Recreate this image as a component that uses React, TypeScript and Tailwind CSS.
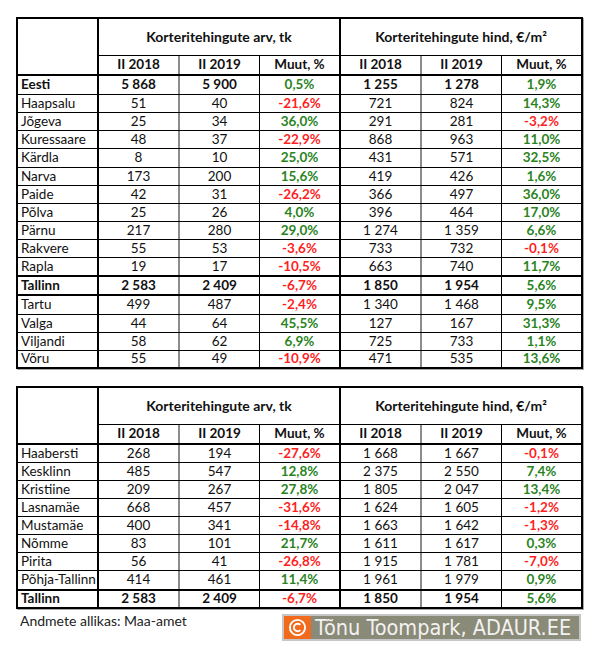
import React from "react";

type Row = { name: string; v: string[]; h: string; b: string; bold?: boolean };

const t1: Row[] = [
  { name: "Eesti", v: ["5 868", "5 900", "0,5%", "1 255", "1 278", "1,9%"], h: "h-[19px]", b: "border-b", bold: true },
  { name: "Haapsalu", v: ["51", "40", "-21,6%", "721", "824", "14,3%"], h: "h-[18px]", b: "border-b" },
  { name: "Jõgeva", v: ["25", "34", "36,0%", "291", "281", "-3,2%"], h: "h-[18px]", b: "border-b" },
  { name: "Kuressaare", v: ["48", "37", "-22,9%", "868", "963", "11,0%"], h: "h-[18px]", b: "border-b" },
  { name: "Kärdla", v: ["8", "10", "25,0%", "431", "571", "32,5%"], h: "h-[19px]", b: "border-b" },
  { name: "Narva", v: ["173", "200", "15,6%", "419", "426", "1,6%"], h: "h-[18px]", b: "border-b" },
  { name: "Paide", v: ["42", "31", "-26,2%", "366", "497", "36,0%"], h: "h-[18px]", b: "border-b" },
  { name: "Põlva", v: ["25", "26", "4,0%", "396", "464", "17,0%"], h: "h-[18px]", b: "border-b" },
  { name: "Pärnu", v: ["217", "280", "29,0%", "1 274", "1 359", "6,6%"], h: "h-[18px]", b: "border-b" },
  { name: "Rakvere", v: ["55", "53", "-3,6%", "733", "732", "-0,1%"], h: "h-[18px]", b: "border-b" },
  { name: "Rapla", v: ["19", "17", "-10,5%", "663", "740", "11,7%"], h: "h-[19px]", b: "border-b-2" },
  { name: "Tallinn", v: ["2 583", "2 409", "-6,7%", "1 850", "1 954", "5,6%"], h: "h-[19px]", b: "border-b-2", bold: true },
  { name: "Tartu", v: ["499", "487", "-2,4%", "1 340", "1 468", "9,5%"], h: "h-[19px]", b: "border-b" },
  { name: "Valga", v: ["44", "64", "45,5%", "127", "167", "31,3%"], h: "h-[18px]", b: "border-b" },
  { name: "Viljandi", v: ["58", "62", "6,9%", "725", "733", "1,1%"], h: "h-[18px]", b: "border-b" },
  { name: "Võru", v: ["55", "49", "-10,9%", "471", "535", "13,6%"], h: "h-[16px]", b: "" },
];

const t2: Row[] = [
  { name: "Haabersti", v: ["268", "194", "-27,6%", "1 668", "1 667", "-0,1%"], h: "h-[18px]", b: "border-b" },
  { name: "Kesklinn", v: ["485", "547", "12,8%", "2 375", "2 550", "7,4%"], h: "h-[18px]", b: "border-b" },
  { name: "Kristiine", v: ["209", "267", "27,8%", "1 805", "2 047", "13,4%"], h: "h-[18px]", b: "border-b" },
  { name: "Lasnamäe", v: ["668", "457", "-31,6%", "1 624", "1 605", "-1,2%"], h: "h-[18px]", b: "border-b" },
  { name: "Mustamäe", v: ["400", "341", "-14,8%", "1 663", "1 642", "-1,3%"], h: "h-[18px]", b: "border-b" },
  { name: "Nõmme", v: ["83", "101", "21,7%", "1 611", "1 617", "0,3%"], h: "h-[18px]", b: "border-b" },
  { name: "Pirita", v: ["56", "41", "-26,8%", "1 915", "1 781", "-7,0%"], h: "h-[18px]", b: "border-b" },
  { name: "Põhja-Tallinn", v: ["414", "461", "11,4%", "1 961", "1 979", "0,9%"], h: "h-[20px]", b: "border-b-2" },
  { name: "Tallinn", v: ["2 583", "2 409", "-6,7%", "1 850", "1 954", "5,6%"], h: "h-[16px]", b: "", bold: true },
];

const pct = (s: string) =>
  s.startsWith("-") ? "text-[#ff1f1f] font-bold" : "text-[#2a841e] font-bold";

function Header() {
  return (
    <div className="flex border-b-2 border-black">
      <div className="w-[81px] border-r-2 border-black" />
      <div className="w-[242px] border-r-2 border-black">
        <div className="h-[37px] border-b border-black flex items-center justify-center font-bold text-[14px]">
          Korteritehingute arv, tk
        </div>
        <div className="flex h-[18px] font-bold">
          <div className="w-[81px] border-r-2 border-[#8c8c8c] flex items-center justify-center">II 2018</div>
          <div className="w-[80px] border-r border-black flex items-center justify-center">II 2019</div>
          <div className="flex-1 flex items-center justify-center">Muut, %</div>
        </div>
      </div>
      <div className="flex-1">
        <div className="h-[37px] border-b border-black flex items-center justify-center font-bold text-[14px]">
          Korteritehingute hind, €/m²
        </div>
        <div className="flex h-[18px] font-bold">
          <div className="w-[81px] border-r-2 border-[#8c8c8c] flex items-center justify-center">II 2018</div>
          <div className="w-[80px] border-r border-black flex items-center justify-center">II 2019</div>
          <div className="flex-1 flex items-center justify-center">Muut, %</div>
        </div>
      </div>
    </div>
  );
}

function Body({ rows }: { rows: Row[] }) {
  return (
    <div>
      {rows.map((r, i) => (
        <div key={i} className={`flex border-black ${r.h} ${r.b} ${r.bold ? "font-bold" : ""}`}>
          <div className="w-[81px] border-r-2 border-black pl-[3px] flex items-center whitespace-nowrap overflow-hidden">{r.name}</div>
          <div className="w-[81px] border-r-2 border-[#8c8c8c] flex items-center justify-center whitespace-nowrap">{r.v[0]}</div>
          <div className="w-[80px] border-r border-black flex items-center justify-center whitespace-nowrap">{r.v[1]}</div>
          <div className={`w-[81px] border-r-2 border-black flex items-center justify-center whitespace-nowrap ${pct(r.v[2])}`}>{r.v[2]}</div>
          <div className="w-[81px] border-r-2 border-[#8c8c8c] flex items-center justify-center whitespace-nowrap">{r.v[3]}</div>
          <div className="w-[80px] border-r border-black flex items-center justify-center whitespace-nowrap">{r.v[4]}</div>
          <div className={`flex-1 flex items-center justify-center whitespace-nowrap ${pct(r.v[5])}`}>{r.v[5]}</div>
        </div>
      ))}
    </div>
  );
}

function Table({ rows, className }: { rows: Row[]; className?: string }) {
  return (
    <div className={`w-[567px] border-2 border-black shadow-[1px_1px_0_#a8a8a8] ${className ?? ""}`}>
      <Header />
      <Body rows={rows} />
    </div>
  );
}

export default function App() {
  return (
    <div
      className="w-[600px] h-[657px] bg-white pt-[17px] pl-[16px] text-[13.5px] leading-none text-[#111]"
      style={{ fontFamily: "Lato, 'Noto Sans', sans-serif" }}
    >
      <Table rows={t1} />
      <Table rows={t2} className="mt-[17px]" />
      <div className="flex items-start w-[567px]">
        <div className="pt-[5px] pl-[4px] text-[#222] text-[14px]">Andmete allikas: Maa-amet</div>
        <div className="ml-auto mr-[2px] mt-[5px] w-[299px] h-[27px] border-2 border-[#c6c6c6] bg-[#8a8a78] flex items-center">
          <div className="w-[27px] h-[23px] bg-[#f26a1b] flex items-center justify-center">
            <svg width="19" height="19" viewBox="0 0 20 20">
              <circle cx="10" cy="10" r="8" fill="none" stroke="white" strokeWidth="2" />
              <path d="M13 7.2 A4 4 0 1 0 13 12.8" fill="none" stroke="white" strokeWidth="2" />
            </svg>
          </div>
          <div
            className="ml-[4px] text-[21.5px] leading-none text-[#f2f2f0] whitespace-nowrap"
            style={{ fontFamily: "'DejaVu Sans Condensed', 'DejaVu Sans', sans-serif" }}
          >
            Tõnu Toompark, ADAUR.EE
          </div>
        </div>
      </div>
    </div>
  );
}
